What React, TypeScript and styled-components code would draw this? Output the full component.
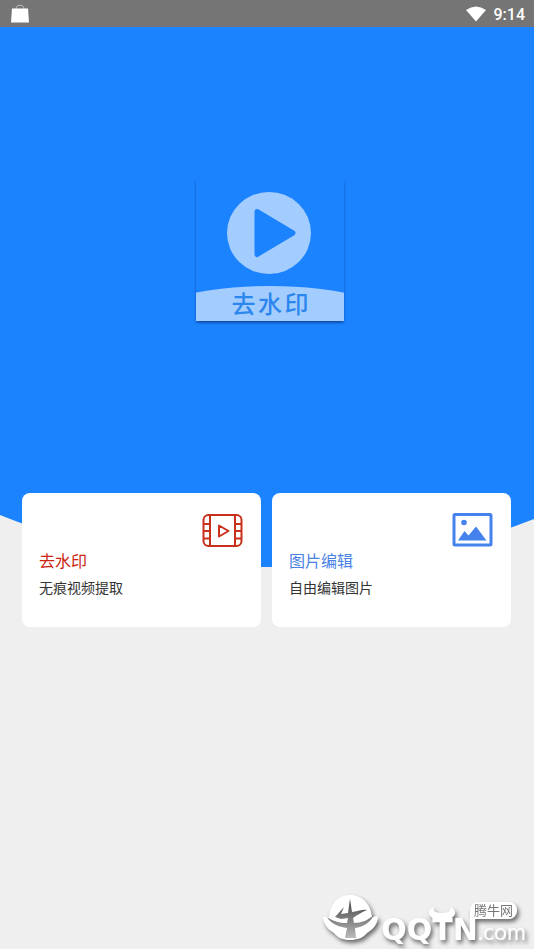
import React from "react";
import styled, { createGlobalStyle } from "styled-components";

const sans = `Roboto, "Noto Sans CJK SC", sans-serif`;

const GlobalStyle = createGlobalStyle`
  * { box-sizing: border-box; }
  body { margin: 0; background: #efefef; font-family: ${sans}; }
`;

const Screen = styled.div`
  position: relative;
  min-height: 100vh;
  background: #efefef;
`;

const StatusBar = styled.header`
  display: flex;
  align-items: center;
  justify-content: space-between;
  height: 27px;
  padding: 0 9px 0 10px;
  background: #757575;
  color: #fff;
`;

const StatusGroup = styled.div`
  display: flex;
  align-items: center;
  gap: 8px;
`;

const BagIcon = styled.svg`
  width: 20px;
  height: 20px;
`;

const WifiIcon = styled.svg`
  width: 20px;
  height: 16px;
`;

const Clock = styled.time`
  padding-top: 2px;
  font-size: 16px;
  line-height: 24px;
  font-weight: 500;
`;

const Hero = styled.section`
  display: flex;
  justify-content: center;
  padding: 152px 0 246px 6px;
  background: #1c83ff;
  clip-path: ellipse(119% 100% at 51% 0);
`;

const AppLogo = styled.div`
  display: flex;
  flex-direction: column;
  align-items: center;
  width: 148px;
  background: #1c83ff;
  box-shadow: 0 2px 3px -1px rgba(0, 30, 90, 0.6), 0 2px 2px rgba(0, 30, 90, 0.2);
`;

const PlayDisc = styled.svg`
  width: 84px;
  height: 82px;
  margin: 13px 2px 12px 0;
`;

const LogoBand = styled.div`
  width: 100%;
  height: 35px;
  background: #a4cdff;
  clip-path: ellipse(86% 100% at 50% 100%);
  color: #2b86ee;
  font-size: 24px;
  line-height: 38px;
  font-weight: 500;
  text-align: center;
`;

const Cards = styled.main`
  position: relative;
  display: grid;
  grid-template-columns: 1fr 1fr;
  gap: 11px;
  margin-top: -74px;
  padding: 0 23px 0 22px;
`;

const Card = styled.button`
  display: flex;
  flex-direction: column;
  align-items: flex-start;
  padding: 20px 18px 26px 17px;
  border: 0;
  border-radius: 8px;
  background: #fff;
  font-family: ${sans};
  text-align: left;
  cursor: pointer;
`;

const CardIcon = styled.svg`
  align-self: flex-end;
  width: 41px;
  height: 35px;
  margin-bottom: 1px;
`;

const CardTitle = styled.span<{ $color: string }>`
  color: ${(p) => p.$color};
  font-size: 16px;
  line-height: 26px;
`;

const CardText = styled.span`
  color: #333;
  font-size: 14px;
  line-height: 26px;
`;

const Watermark = styled.div`
  position: absolute;
  right: 8px;
  bottom: 0;
  display: flex;
  align-items: flex-end;
  color: #fff;
  filter: drop-shadow(2px 3px 2px rgba(0, 0, 0, 0.55));
`;

const Emblem = styled.svg`
  width: 58px;
  height: 57px;
`;

const Wordmark = styled.div`
  position: relative;
  display: flex;
  align-items: baseline;
`;

const Brand = styled.span`
  font-family: "DejaVu Sans", sans-serif;
  font-size: 30px;
  line-height: 38px;
  font-weight: 700;
`;

const Domain = styled.span`
  font-family: Lato, sans-serif;
  font-size: 23px;
  line-height: 32px;
`;

const Horns = styled.svg`
  position: absolute;
  left: 47px;
  top: -5px;
  width: 28px;
  height: 14px;
`;

const Bubble = styled.span`
  position: absolute;
  right: 9px;
  top: -9px;
  padding: 0 4px;
  border-radius: 8px 8px 8px 2px;
  background: #fff;
  color: #777;
  font-size: 13px;
  line-height: 17px;
`;

export default function App() {
  return (
    <Screen>
      <GlobalStyle />
      <StatusBar>
        <BagIcon viewBox="0 0 20 20" aria-hidden="true">
          <path d="M6 5C6 0 14 0 14 5" fill="none" stroke="#c4c4c4" />
          <path d="M2 4.500H18L19 18.500H1Z" fill="#fff" />
        </BagIcon>
        <StatusGroup>
          <WifiIcon viewBox="0 0 20 16" aria-hidden="true">
            <path d="M0 4Q10-3 20 4L10 15.500Z" fill="#fff" />
          </WifiIcon>
          <Clock>9:14</Clock>
        </StatusGroup>
      </StatusBar>
      <Hero>
        <AppLogo>
          <PlayDisc viewBox="0 0 84 82" aria-hidden="true">
            <ellipse cx="42" cy="41" rx="42" ry="41" fill="#a4cdff" />
            <path d="M30 19.500L66 41L30 62.500Z" fill="#1c83ff" stroke="#1c83ff" strokeWidth="5" strokeLinejoin="round" />
          </PlayDisc>
          <LogoBand>去&#8202;水&#8202;印</LogoBand>
        </AppLogo>
      </Hero>
      <Cards>
        <Card type="button">
          <CardIcon viewBox="0 0 41 35" fill="none" stroke="#c9301c" strokeWidth="2" strokeLinejoin="round" aria-hidden="true">
            <rect x="1.500" y="2" width="38" height="31" rx="5" />
            <path d="M8 2V33M33 2V33M1.500 11H8M1.500 18H8M1.500 25.500H8M33 11H39.500M33 18H39.500M33 25.500H39.500M17 12.500V23.500L26.500 18Z" />
          </CardIcon>
          <CardTitle $color="#cc2410">去水印</CardTitle>
          <CardText>无痕视频提取</CardText>
        </Card>
        <Card type="button">
          <CardIcon viewBox="0 0 41 35" aria-hidden="true">
            <rect x="2" y="1.500" width="37" height="30.500" rx="1" fill="none" stroke="#4582ee" strokeWidth="3" />
            <circle cx="12" cy="9.500" r="2.800" fill="#4582ee" />
            <path d="M6 27.500L12.500 18L16.500 22.500L24 13.500L34.500 27.500Z" fill="#4582ee" />
          </CardIcon>
          <CardTitle $color="#4a82e4">图片编辑</CardTitle>
          <CardText>自由编辑图片</CardText>
        </Card>
      </Cards>
      <Watermark>
        <Emblem viewBox="0 0 58 57" aria-hidden="true">
          <defs>
            <linearGradient id="shade" x1="0" y1="0" x2="0" y2="1">
              <stop offset="0" stopColor="#444" />
              <stop offset="0.600" stopColor="#888" />
              <stop offset="1" stopColor="#bbb" />
            </linearGradient>
          </defs>
          <path d="M6 25C7 11 16 3 27 3C38 3 48 11 49 25L55 24C55 33 49 38 44 41C40 46 34 48 27 48C20 48 15 46 11 41C6 38 1 34 0 25Z" fill="#fff" />
          <path d="M27 7L29 20C34 20 39 17 44 18C39 20 34 23 30 26L31 31C39 31 45 28 51 23C47 31 40 35 32 36L33 46H22L24 36C16 35 8 32 4 25C10 29 16 31 24 31L25 26L18 27L12 25L21 15L18 22L25 21Z" fill="url(#shade)" />
        </Emblem>
        <Wordmark>
          <Brand>QQTN</Brand>
          <Domain>.com</Domain>
          <Horns viewBox="0 0 28 14" aria-hidden="true">
            <path d="M6 1C-2 4 0 12 8 13H20C28 12 30 4 22 1C24 5 20 7 14 7C8 7 4 5 6 1Z" fill="#fff" />
          </Horns>
          <Bubble>腾牛网</Bubble>
        </Wordmark>
      </Watermark>
    </Screen>
  );
}
